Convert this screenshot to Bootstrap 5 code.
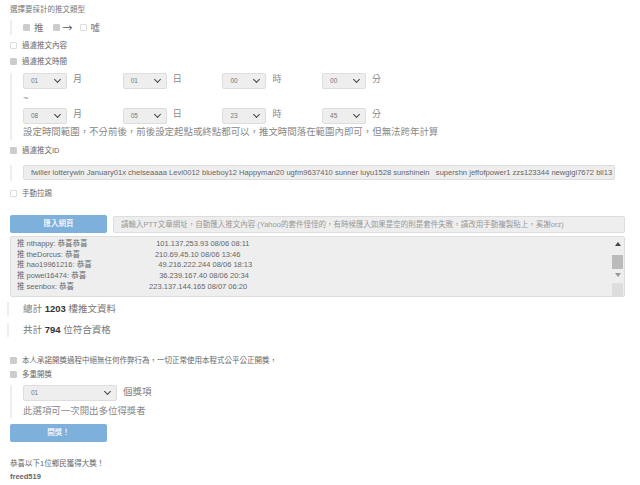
<!DOCTYPE html>
<html lang="zh-Hant">
<head>
<meta charset="utf-8">
<title>抽獎</title>
<link rel="stylesheet" href="https://cdn.jsdelivr.net/npm/bootstrap@5.3.0/dist/css/bootstrap.min.css">
<style>
html,body{height:485px;overflow:hidden}
body{font-family:"Liberation Sans","Noto Sans CJK TC",sans-serif;font-size:7.5px;line-height:11px;color:#666;background:#fff}
.pg{padding:4px 15px 0 10px}
.ttl{height:11px;color:#777;font-size:7.5px}
.bq{border-left:2px solid #eee;padding-left:11px}
.bq-top{margin-top:5px;height:15px;font-size:9.5px;line-height:15px;color:#777}
.ck{width:7px;height:7px;border:1px solid #ddd;background:#fff;border-radius:1px;flex:none;display:inline-block}
.ck.on{background:#ccc;border-color:#ccc}
.g1{margin:0 9px 0 4px}
.g2{margin:0 7px 0 3px;font-size:10px;font-family:"Noto Sans CJK TC",sans-serif;color:#555}
.g3{margin-left:4px}
.rowck{display:flex;align-items:center;gap:5px;height:11px;color:#666;font-size:7.5px}
.sel{display:block;height:16px;width:44px;border:1px solid #ddd;border-radius:2px;background:#eee;color:#777;font-size:6.5px;line-height:14px;padding:0 0 0 7px;position:relative;flex:none}
.sel::after{content:"";position:absolute;right:6px;top:3px;width:5px;height:5px;border:solid #444;border-width:0 1.5px 1.5px 0;transform:rotate(45deg)}
.sel.wide{width:94px}
.tm{display:flex;height:16px}
.cell{width:99.7px;display:flex;gap:6px;font-size:9px;line-height:13px;color:#888}
.hlp{font-size:9.45px;line-height:14px;color:#888;white-space:nowrap}
.inp{height:15px;background:#eee;border:1px solid #ddd;border-radius:2px;font-size:7.6px;line-height:13px;padding-left:7px;color:#666;white-space:nowrap;overflow:hidden}
.bbtn{width:97px;height:18px;background:#7eb0dc;border:0;border-radius:2px;color:#fff;font-size:7.5px;font-weight:500;padding:0;flex:none;opacity:1}
.ph{flex:1;height:17px;margin-top:1px;background:#eee;border:1px solid #ddd;border-radius:2px;color:#999;font-size:7.5px;line-height:15px;padding-left:7px;white-space:nowrap;overflow:hidden}
.ta{height:61px;margin-top:3px;background:#eee;border:1px solid #ddd;border-radius:2px;position:relative;padding:2px 0 0 6px;font-size:7.5px;line-height:10.7px;color:#666;white-space:pre}
.sb{position:absolute;right:0;top:0;bottom:0;width:13px}
.sb i{position:absolute;left:1px;width:11px}
.up{top:5px;height:0;border-left:3px solid transparent;border-right:3px solid transparent;border-bottom:4px solid #444;width:0!important;left:3.5px!important}
.th{top:18px;height:14px;background:#bbb}
.dn{top:36px;height:0;border-left:3px solid transparent;border-right:3px solid transparent;border-top:4px solid #999;width:0!important;left:3.5px!important}
.gr{bottom:0;height:13px;background:#ddd}
.stat{margin-left:-3px;height:14px;line-height:14px;font-size:9.5px;color:#777;padding-left:14px;border-left:2px solid #eee}
.stat b{color:#333}
.win{color:#666;font-size:7.5px}
</style>
</head>
<body>
<div class="pg">
  <div class="ttl">選擇要採計的推文類型</div>
  <div class="bq bq-top d-flex align-items-center">
    <span class="ck on"></span><span class="g1">推</span>
    <span class="ck on"></span><span class="g2">→</span>
    <span class="ck"></span><span class="g3">噓</span>
  </div>
  <div class="rowck" style="margin-top:5px"><span class="ck"></span>過濾推文內容</div>
  <div class="rowck" style="margin-top:5px"><span class="ck on"></span>過濾推文時間</div>
  <div class="bq" style="margin-top:6px">
    <div class="tm">
      <div class="cell"><span class="sel">01</span>月</div>
      <div class="cell"><span class="sel">01</span>日</div>
      <div class="cell"><span class="sel">00</span>時</div>
      <div class="cell"><span class="sel">00</span>分</div>
    </div>
    <div style="height:19px;line-height:19px;color:#888;font-size:9px">~</div>
    <div class="tm">
      <div class="cell"><span class="sel">08</span>月</div>
      <div class="cell"><span class="sel">05</span>日</div>
      <div class="cell"><span class="sel">23</span>時</div>
      <div class="cell"><span class="sel">45</span>分</div>
    </div>
    <div class="hlp" style="padding-top:1px;height:16px">設定時間範圍&#65292;不分前後&#65292;前後設定起點或終點都可以&#65292;推文時間落在範圍內即可&#65292;但無法跨年計算</div>
  </div>
  <div class="rowck" style="margin-top:5px"><span class="ck on"></span>過濾推文ID</div>
  <div class="bq" style="margin-top:9px;height:16px">
    <div class="inp" style="margin-right:10px">fwiller lotterywin January01x chelseaaaa Levi0012 blueboy12 Happyman20 ugfm9637410 sunner luyu1528 sunshinein &nbsp; supershn jeffofpower1 zzs123344 newgigi7672 bll13</div>
  </div>
  <div class="rowck" style="margin-top:7px"><span class="ck"></span>手動拉踢</div>
  <div class="d-flex" style="margin-top:16px;gap:6px">
    <button class="btn bbtn">匯入網頁</button>
    <div class="ph">請輸入PTT文章網址&#65292;自動匯入推文內容 (Yahoo的套件怪怪的&#65292;有時候匯入如果是空的則是套件失敗&#65292;請改用手動複製貼上&#65292;奚謝orz)</div>
  </div>
  <div class="ta">推 nthappy: 恭喜恭喜                                 101.137.253.93 08/06 08:11
推 theDorcus: 恭喜                                    210.69.45.10 08/06 13:46
推 hao19961216: 恭喜                                49.216.222.244 08/06 18:13
推 powei16474: 恭喜                                   36.239.167.40 08/06 20:34
推 seenbox: 恭喜                                    223.137.144.165 08/07 06:20<div class="sb"><i class="up"></i><i class="th"></i><i class="dn"></i><i class="gr"></i></div></div>
  <div class="stat" style="margin-top:5px">總計 <b>1203</b> 樓推文資料</div>
  <div class="stat" style="margin-top:7px">共計 <b>794</b> 位符合資格</div>
  <div class="rowck" style="margin-top:18px"><span class="ck on"></span>本人承諾開獎過程中絕無任何作弊行為&#65292;一切正常使用本程式公平公正開獎&#65292;</div>
  <div class="rowck" style="margin-top:3px"><span class="ck on"></span>多重開獎</div>
  <div class="bq" style="margin-top:5px">
    <div class="d-flex" style="gap:6px;font-size:9.5px;line-height:13px;color:#777;height:16px"><span class="sel wide">01</span>個獎項</div>
    <div class="hlp" style="height:17px;line-height:19px">此選項可一次開出多位得獎者</div>
  </div>
  <button class="btn bbtn d-block" style="margin-top:6px">開獎&#65281;</button>
  <div class="win" style="margin-top:16px">恭喜以下1位鄉民獲得大獎&#65281;</div>
  <div class="win" style="margin-top:2px"><b>freed519</b></div>
</div>
</body>
</html>
